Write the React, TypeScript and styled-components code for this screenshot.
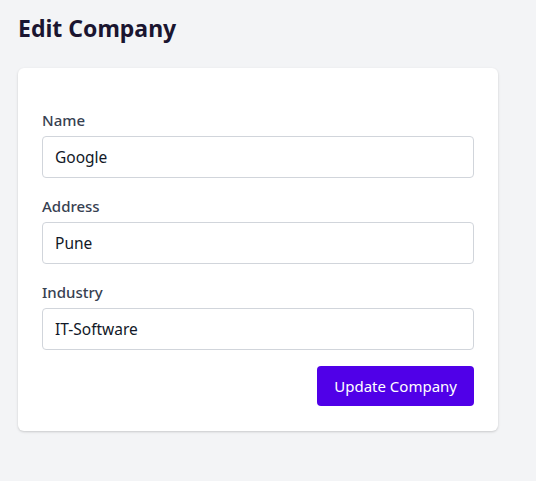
import React from "react";
import styled, { createGlobalStyle } from "styled-components";

const Global = createGlobalStyle`
  html, body { margin: 0; padding: 0; background: #f3f4f6; }
  body { font-family: "Noto Sans", "Open Sans", sans-serif; }
  * { box-sizing: border-box; }
`;

const Page = styled.div`
  padding: 12px 18px 40px;
  min-height: 481px;
`;

const Title = styled.h1`
  margin: 0 0 24px 0;
  font-size: 23px;
  line-height: 32px;
  font-weight: 700;
  color: #1a1530;
`;

const Card = styled.form`
  width: 480px;
  background: #fff;
  border-radius: 6px;
  box-shadow: 0 1px 3px rgba(0,0,0,0.12), 0 1px 2px rgba(0,0,0,0.06);
  padding: 40px 24px 25px;
  display: flex;
  flex-direction: column;
  gap: 16px;
`;

const Field = styled.div`
  display: flex;
  flex-direction: column;
  gap: 4px;
`;

const Label = styled.label`
  font-size: 15px;
  line-height: 24px;
  font-weight: 500;
  color: #374151;
`;

const Input = styled.input`
  height: 42px;
  border: 1px solid #d1d5db;
  border-radius: 4px;
  padding: 0 12px;
  font-family: inherit;
  font-size: 15.5px;
  color: #111827;
  background: #fff;
  outline: none;
`;

const Actions = styled.div`
  display: flex;
  justify-content: flex-end;
`;

const Button = styled.button`
  height: 40px;
  padding: 0 17px;
  background: #5000e8;
  color: #fff;
  border: none;
  border-radius: 4px;
  font-family: inherit;
  font-size: 15px;
  cursor: pointer;
`;

const fields = [
  { label: "Name", value: "Google" },
  { label: "Address", value: "Pune" },
  { label: "Industry", value: "IT-Software" },
];

export default function App() {
  return (
    <>
      <Global />
      <Page>
        <Title>Edit Company</Title>
        <Card onSubmit={(e) => e.preventDefault()}>
          {fields.map((f) => (
            <Field key={f.label}>
              <Label>{f.label}</Label>
              <Input defaultValue={f.value} />
            </Field>
          ))}
          <Actions>
            <Button type="submit">Update Company</Button>
          </Actions>
        </Card>
      </Page>
    </>
  );
}
